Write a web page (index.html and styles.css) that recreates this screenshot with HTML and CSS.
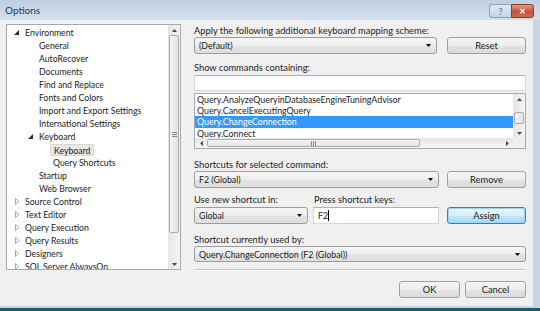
FILE: index.html
```html
<!DOCTYPE html>
<html lang="en">

<head>
    <meta charset="UTF-8">
    <title>Options</title>
    <link rel="stylesheet" href="styles.css">
</head>

<body>
    <div class="window">
        <div class="titlebar">
            <span class="title">Options</span>
            <div class="caption-buttons">
                <div class="cap help">?</div>
                <div class="cap close">&#10005;</div>
            </div>
        </div>

        <div class="client">
            <!-- left tree -->
            <div class="tree">
                <div class="tree-items">
                    <div class="node"><span class="exp"><svg width="5" height="5" viewBox="0 0 5 5"><polygon points="5,0 5,5 0,5" fill="#2b2b2b"/></svg></span><span class="lbl">Environment</span></div>
                    <div class="node lvl1"><span class="exp"></span><span class="lbl">General</span></div>
                    <div class="node lvl1"><span class="exp"></span><span class="lbl">AutoRecover</span></div>
                    <div class="node lvl1"><span class="exp"></span><span class="lbl">Documents</span></div>
                    <div class="node lvl1"><span class="exp"></span><span class="lbl">Find and Replace</span></div>
                    <div class="node lvl1"><span class="exp"></span><span class="lbl">Fonts and Colors</span></div>
                    <div class="node lvl1"><span class="exp"></span><span class="lbl">Import and Export Settings</span></div>
                    <div class="node lvl1"><span class="exp"></span><span class="lbl">International Settings</span></div>
                    <div class="node lvl1"><span class="exp"><svg width="5" height="5" viewBox="0 0 5 5"><polygon points="5,0 5,5 0,5" fill="#2b2b2b"/></svg></span><span class="lbl">Keyboard</span></div>
                    <div class="node lvl2"><span class="exp"></span><span class="lbl selected">Keyboard</span></div>
                    <div class="node lvl2"><span class="exp"></span><span class="lbl">Query Shortcuts</span></div>
                    <div class="node lvl1"><span class="exp"></span><span class="lbl">Startup</span></div>
                    <div class="node lvl1"><span class="exp"></span><span class="lbl">Web Browser</span></div>
                    <div class="node"><span class="exp"><svg width="4" height="7" viewBox="0 0 4 7"><polygon points="0.5,0.5 3.5,3.5 0.5,6.5" fill="none" stroke="#a6a6a6"/></svg></span><span class="lbl">Source Control</span></div>
                    <div class="node"><span class="exp"><svg width="4" height="7" viewBox="0 0 4 7"><polygon points="0.5,0.5 3.5,3.5 0.5,6.5" fill="none" stroke="#a6a6a6"/></svg></span><span class="lbl">Text Editor</span></div>
                    <div class="node"><span class="exp"><svg width="4" height="7" viewBox="0 0 4 7"><polygon points="0.5,0.5 3.5,3.5 0.5,6.5" fill="none" stroke="#a6a6a6"/></svg></span><span class="lbl">Query Execution</span></div>
                    <div class="node"><span class="exp"><svg width="4" height="7" viewBox="0 0 4 7"><polygon points="0.5,0.5 3.5,3.5 0.5,6.5" fill="none" stroke="#a6a6a6"/></svg></span><span class="lbl">Query Results</span></div>
                    <div class="node"><span class="exp"><svg width="4" height="7" viewBox="0 0 4 7"><polygon points="0.5,0.5 3.5,3.5 0.5,6.5" fill="none" stroke="#a6a6a6"/></svg></span><span class="lbl">Designers</span></div>
                    <div class="node"><span class="exp"><svg width="4" height="7" viewBox="0 0 4 7"><polygon points="0.5,0.5 3.5,3.5 0.5,6.5" fill="none" stroke="#a6a6a6"/></svg></span><span class="lbl">SQL Server AlwaysOn</span></div>
                </div>
                <div class="vscroll">
                    <div class="arrow"><svg width="5" height="3" viewBox="0 0 5 3"><polygon points="0,3 2.5,0 5,3" fill="#4a4a4a"/></svg></div>
                    <div class="thumb tree-thumb"><span class="grip-h"></span></div>
                    <div class="track"></div>
                    <div class="arrow"><svg width="5" height="3" viewBox="0 0 5 3"><polygon points="0,0 2.5,3 5,0" fill="#4a4a4a"/></svg></div>
                </div>
            </div>

            <!-- right panel -->
            <div class="panel">
                <div class="label">Apply the following additional keyboard mapping scheme:</div>
                <div class="row">
                    <div class="combo w-scheme"><span>(Default)</span><svg width="5" height="3" viewBox="0 0 5 3"><polygon points="0,0 2.5,3 5,0" fill="#000"/></svg></div>
                    <div class="btn">Reset</div>
                </div>

                <div class="label gap-md">Show commands containing:</div>
                <div class="textbox full"></div>

                <div class="listbox">
                    <div class="list-items">
                        <div class="item">Query.AnalyzeQueryinDatabaseEngineTuningAdvisor</div>
                        <div class="item">Query.CancelExecutingQuery</div>
                        <div class="item active">Query.ChangeConnection</div>
                        <div class="item">Query.Connect</div>
                    </div>
                    <div class="list-vscroll">
                        <div class="arrow"><svg width="5" height="3" viewBox="0 0 5 3"><polygon points="0,3 2.5,0 5,3" fill="#4a4a4a"/></svg></div>
                        <div class="track small"></div>
                        <div class="thumb list-thumb"></div>
                        <div class="track"></div>
                        <div class="arrow"><svg width="5" height="3" viewBox="0 0 5 3"><polygon points="0,0 2.5,3 5,0" fill="#4a4a4a"/></svg></div>
                    </div>
                    <div class="list-hscroll">
                        <div class="harrow"><svg width="3" height="5" viewBox="0 0 3 5"><polygon points="3,0 0,2.5 3,5" fill="#4a4a4a"/></svg></div>
                        <div class="hthumb"><span class="grip-v"></span></div>
                        <div class="htrack"></div>
                        <div class="harrow"><svg width="3" height="5" viewBox="0 0 3 5"><polygon points="0,0 3,2.5 0,5" fill="#4a4a4a"/></svg></div>
                    </div>
                    <div class="corner"></div>
                </div>

                <div class="label gap-lg">Shortcuts for selected command:</div>
                <div class="row">
                    <div class="combo w-shortcuts"><span>F2 (Global)</span><svg width="5" height="3" viewBox="0 0 5 3"><polygon points="0,0 2.5,3 5,0" fill="#000"/></svg></div>
                    <div class="btn">Remove</div>
                </div>

                <div class="label-row">
                    <div class="label">Use new shortcut in:</div>
                    <div class="label">Press shortcut keys:</div>
                </div>
                <div class="row">
                    <div class="combo w-scope"><span>Global</span><svg width="5" height="3" viewBox="0 0 5 3"><polygon points="0,0 2.5,3 5,0" fill="#000"/></svg></div>
                    <div class="textbox keys">F2<span class="caret"></span></div>
                    <div class="btn default">Assign</div>
                </div>

                <div class="label gap-lg">Shortcut currently used by:</div>
                <div class="combo full"><span>Query.ChangeConnection (F2 (Global))</span><svg width="5" height="3" viewBox="0 0 5 3"><polygon points="0,0 2.5,3 5,0" fill="#000"/></svg></div>

                <div class="separator"></div>

                <div class="actions">
                    <div class="btn">OK</div>
                    <div class="btn">Cancel</div>
                </div>
            </div>
        </div>
    </div>
</body>

</html>
```

FILE: styles.css
```css
* {
    margin: 0;
    padding: 0;
    box-sizing: border-box;
}

body {
    width: 540px;
    height: 311px;
    overflow: hidden;
    font-family: Lato, "Noto Sans", sans-serif;
    font-size: 9.3px;
    color: #1b1b1b;
}

.window {
    height: 311px;
    background: #c4d5e8;
    border-bottom: 3px solid #1e5c6b;
    display: flex;
    flex-direction: column;
}

/* 标题栏 */
.titlebar {
    height: 20px;
    display: flex;
    justify-content: space-between;
    align-items: flex-start;
    padding-left: 5px;
    background: linear-gradient(#c0d0e3, #d2deec);
}

.title {
    color: #1e3957;
    font-size: 10px;
    line-height: 20px;
}

.caption-buttons {
    display: flex;
    margin-top: 4px;
    margin-right: 6px;
}

.cap {
    height: 14px;
    display: flex;
    align-items: center;
    justify-content: center;
    font-size: 9px;
    font-weight: 700;
}

.cap.help {
    width: 22px;
    border: 1px solid #8ea2ba;
    border-right: none;
    border-radius: 3px 0 0 3px;
    background: linear-gradient(#dfe8f2, #c3d2e3);
    color: #6f86a3;
}

.cap.close {
    width: 23px;
    border: 1px solid #8d3a2c;
    border-radius: 0 3px 3px 0;
    background: linear-gradient(#e29a86, #c9503a 55%, #cf6a50);
    color: #fff;
    font-size: 8px;
}

.client {
    flex: 1;
    margin-right: 7px;
    margin-bottom: 2px;
    background: #f0f0f0;
    display: flex;
    align-items: flex-start;
    padding: 4px 0 0 6px;
}

/* 树形列表 */
.tree {
    width: 175px;
    height: 246px;
    background: #fff;
    border: 1px solid #a3aab3;
    display: flex;
    font-size: 8.7px;
}

.tree-items {
    flex: 1;
    padding-top: 1px;
    overflow: hidden;
}

.node {
    height: 13px;
    display: flex;
    align-items: center;
    white-space: nowrap;
}

.node.lvl1 {
    padding-left: 14px;
}

.node.lvl2 {
    padding-left: 28px;
}

.exp {
    width: 18px;
    flex-shrink: 0;
    display: flex;
    justify-content: flex-end;
    padding-right: 6px;
}

.lbl {
    line-height: 13px;
}

.lbl.selected {
    margin-left: -3px;
    padding: 0 3px;
    height: 12px;
    line-height: 11px;
    background: #e8e8e8;
    border: 1px solid #d6d6d6;
    border-radius: 2px;
}

/* 滚动条 */
.vscroll,
.list-vscroll {
    width: 12px;
    display: flex;
    flex-direction: column;
    background: linear-gradient(to right, #e6e6e6, #f4f4f4);
}

.arrow {
    height: 10px;
    display: flex;
    align-items: center;
    justify-content: center;
}

.track {
    flex: 1;
}

.track.small {
    flex: 0 0 8px;
}

.thumb {
    margin: 0 1px;
    border: 1px solid #ababab;
    border-radius: 2px;
    background: linear-gradient(to right, #f6f6f6, #e2e2e2);
    display: flex;
    align-items: center;
    justify-content: center;
}

.tree-thumb {
    height: 198px;
}

.list-thumb {
    height: 12px;
}

.grip-h {
    width: 5px;
    height: 5px;
    border-top: 1px solid #8a8a8a;
    border-bottom: 1px solid #8a8a8a;
    background: linear-gradient(transparent 1px, #8a8a8a 1px, #8a8a8a 2px, transparent 2px);
}

/* 右侧面板 */
.panel {
    width: 332px;
    margin-left: 13px;
    display: flex;
    flex-direction: column;
}

.label {
    height: 13px;
    line-height: 13px;
    white-space: nowrap;
}

.gap-md {
    margin-top: 7px;
}

.gap-lg {
    margin-top: 9px;
}

.row {
    display: flex;
    align-items: center;
}

.label-row {
    display: grid;
    grid-template-columns: 120px 1fr;
    margin-top: 5px;
    margin-bottom: 1px;
}

.combo {
    height: 17px;
    display: flex;
    align-items: center;
    justify-content: space-between;
    padding: 0 5px 0 4px;
    border: 1px solid #9c9c9c;
    border-radius: 3px;
    background: linear-gradient(#f5f5f5, #eeeeee 50%, #e4e4e4 51%, #dedede);
    white-space: nowrap;
    font-size: 8.8px;
}

.combo.full {
    width: 332px;
    height: 16px;
}

.w-scheme {
    width: 243px;
}

.w-shortcuts {
    width: 245px;
}

.w-scope {
    width: 114px;
}

.btn {
    width: 79px;
    height: 17px;
    display: flex;
    align-items: center;
    justify-content: center;
    border: 1px solid #a0a0a0;
    border-radius: 3px;
    background: linear-gradient(#f5f5f5, #eeeeee 50%, #e3e3e3 51%, #dbdbdb);
    margin-left: auto;
}

.btn.default {
    border-color: #3d7eb3;
    background: linear-gradient(#e9f5fc, #d8eefb 50%, #bee6fd 51%, #a8daf6);
    box-shadow: inset 0 0 0 1px #9ad6f3;
}

.textbox {
    height: 16px;
    background: #fff;
    border: 1px solid #d3d8de;
    border-top-color: #acb1b8;
}

.textbox.full {
    width: 332px;
    margin-top: 1px;
}

.textbox.keys {
    width: 126px;
    height: 17px;
    margin-left: 5px;
    padding-left: 4px;
    display: flex;
    align-items: center;
    font-size: 8.8px;
}

.caret {
    width: 1px;
    height: 11px;
    background: #000;
}

/* 命令列表 */
.listbox {
    width: 332px;
    height: 56px;
    margin-top: 2px;
    background: #fff;
    border: 1px solid #a3aab3;
    display: grid;
    grid-template-columns: 1fr 12px;
    grid-template-rows: 1fr 10px;
    font-size: 8.8px;
}

.list-items {
    overflow: hidden;
}

.item {
    height: 11px;
    line-height: 11px;
    padding-left: 2px;
    white-space: nowrap;
}

.item.active {
    height: 12px;
    line-height: 12px;
    background: #3399ff;
    color: #fff;
}

.list-hscroll {
    display: flex;
    background: linear-gradient(#e6e6e6, #f4f4f4);
}

.harrow {
    width: 12px;
    display: flex;
    align-items: center;
    justify-content: center;
}

.hthumb {
    width: 213px;
    margin: 1px 0;
    border: 1px solid #ababab;
    border-radius: 2px;
    background: linear-gradient(#f6f6f6, #e2e2e2);
    display: flex;
    align-items: center;
    justify-content: center;
}

.grip-v {
    width: 5px;
    height: 5px;
    border-left: 1px solid #8a8a8a;
    border-right: 1px solid #8a8a8a;
    background: linear-gradient(to right, transparent 1px, #8a8a8a 1px, #8a8a8a 2px, transparent 2px);
}

.htrack {
    flex: 1;
}

.corner {
    background: #f0f0f0;
}

.separator {
    height: 2px;
    margin-top: 7px;
    border-top: 1px solid #c8c8c8;
    border-bottom: 1px solid #fff;
}

.actions {
    display: flex;
    justify-content: flex-end;
    gap: 5px;
    margin-top: 10px;
}

.actions .btn {
    width: 61px;
    margin-left: 0;
}
```
